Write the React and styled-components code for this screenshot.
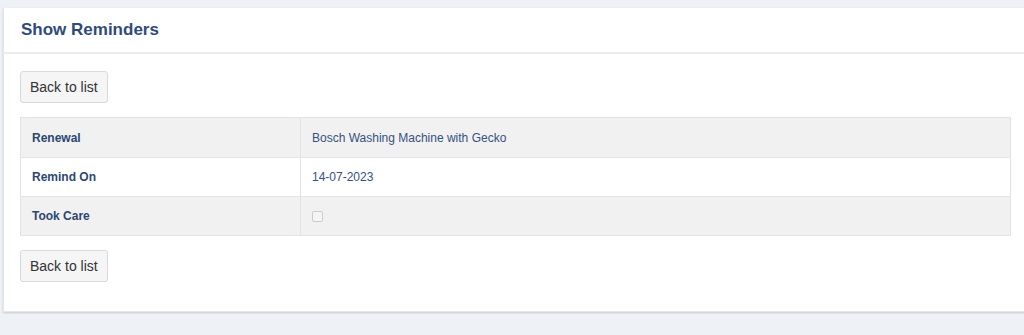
import React from 'react';
import styled, { createGlobalStyle } from 'styled-components';

const GlobalStyle = createGlobalStyle`
  html, body {
    margin: 0;
    padding: 0;
    background: #eef2f6;
    font-family: "Liberation Sans", Arial, Helvetica, sans-serif;
    overflow: hidden;
  }
`;

const Page = styled.div`
  padding: 8px 0 23px 3px;
  min-height: 335px;
  box-sizing: border-box;
`;

const Card = styled.section`
  margin-right: -2px;
  background: #ffffff;
  border: 1px solid #e3e7ec;
  border-top: none;
  border-right: none;
  box-shadow: 0 1px 2px rgba(0, 0, 0, 0.16);
`;

const CardHeader = styled.header`
  height: 44px;
  display: flex;
  align-items: center;
  padding: 0 17px;
  border-bottom: 2px solid #ececec;
`;

const Title = styled.h2`
  margin: 0;
  font-size: 17px;
  font-weight: 700;
  color: #2f4b7b;
`;

const CardBody = styled.div`
  display: flex;
  flex-direction: column;
  align-items: flex-start;
  gap: 14px;
  padding: 17px 15px 29px 16px;
`;

const Button = styled.button`
  height: 32px;
  padding: 0 9px;
  font-family: inherit;
  font-size: 14px;
  color: #333333;
  background: #f5f5f6;
  border: 1px solid #dadada;
  border-radius: 3px;
  cursor: pointer;
`;

const Table = styled.table`
  width: 100%;
  table-layout: fixed;
  border-collapse: collapse;
  border: 1px solid #dfe3e8;
  font-size: 12px;
`;

const Row = styled.tr`
  background: ${(p) => (p.striped ? '#f1f1f1' : '#ffffff')};
  border-bottom: 1px solid #e2e5e9;
`;

const Label = styled.th`
  box-sizing: border-box;
  width: 280px;
  height: ${(p) => (p.first ? 40 : 39)}px;
  padding: 0 11px;
  text-align: left;
  font-weight: 700;
  color: #2c4672;
  border-right: 1px solid #dfe3e8;
`;

const Value = styled.td`
  padding: 0 11px;
  color: #36507f;
`;

const CheckBox = styled.input`
  appearance: none;
  display: block;
  width: 11px;
  height: 11px;
  margin: 0;
  border: 1px solid #cbcbcb;
  border-radius: 2px;
  background: #f5f5f5;
`;

const reminder = {
  renewal: 'Bosch Washing Machine with Gecko',
  remindOn: '14-07-2023',
  tookCare: false,
};

export default function App() {
  return (
    <>
      <GlobalStyle />
      <Page>
        <Card>
          <CardHeader>
            <Title>Show Reminders</Title>
          </CardHeader>
          <CardBody>
            <Button>Back to list</Button>
            <Table>
              <tbody>
                <Row striped>
                  <Label first>Renewal</Label>
                  <Value>{reminder.renewal}</Value>
                </Row>
                <Row>
                  <Label>Remind On</Label>
                  <Value>{reminder.remindOn}</Value>
                </Row>
                <Row striped>
                  <Label>Took Care</Label>
                  <Value>
                    <CheckBox type="checkbox" checked={reminder.tookCare} disabled readOnly />
                  </Value>
                </Row>
              </tbody>
            </Table>
            <Button>Back to list</Button>
          </CardBody>
        </Card>
      </Page>
    </>
  );
}
